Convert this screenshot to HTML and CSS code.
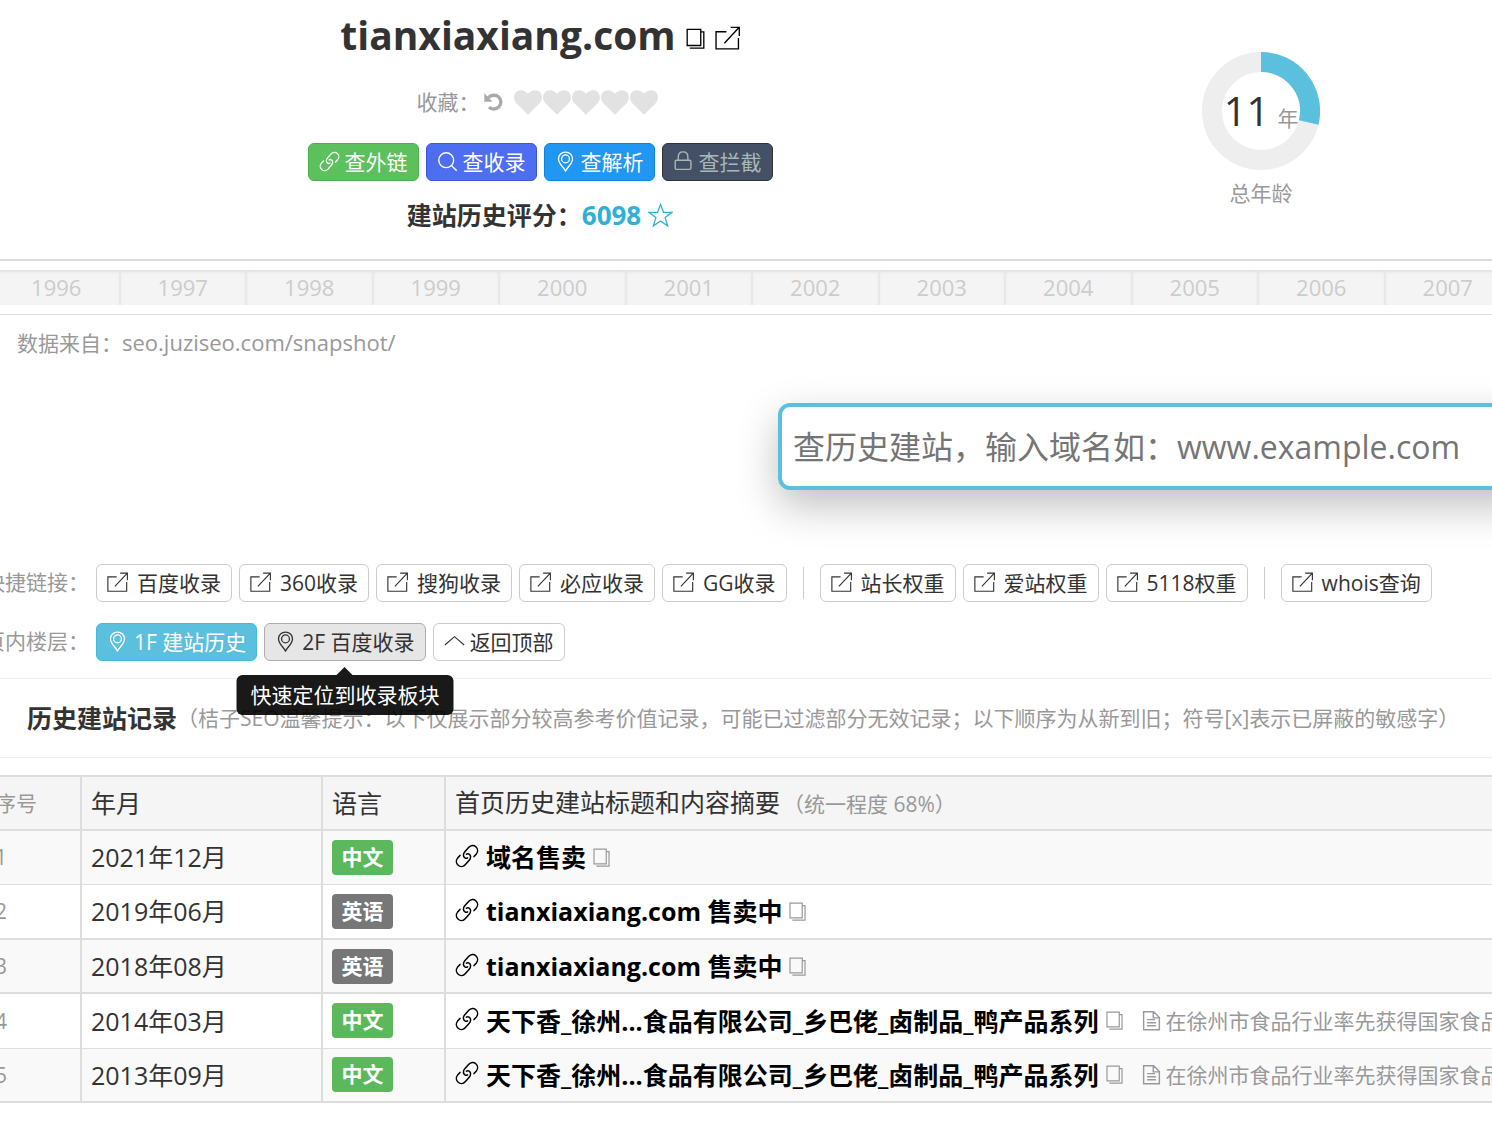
FILE: index.html
```html
<!DOCTYPE html>
<html lang="zh-CN">
<head>
<meta charset="utf-8">
<meta name="viewport" content="width=device-width, initial-scale=1">
<title>tianxiaxiang.com 建站历史</title>
<link rel="stylesheet" href="styles.css">
</head>
<body>
<svg class="sprite" aria-hidden="true">
  <symbol id="i-link" viewBox="0 0 24 24"><g fill="none" stroke="currentColor" stroke-width="1.500" stroke-linecap="round"><path d="M12.600 13.800C10.800 15 8.600 13.600 8.400 11.400C8.300 10 8.900 8.800 9.800 7.800L13.800 3.300C15.700 1.200 18.700 .8 20.800 2.700C22.900 4.600 23.200 7.700 21.400 9.900L19 12.600"/><path d="M11.400 10.200C13.200 9 15.400 10.400 15.600 12.600C15.700 14 15.100 15.200 14.200 16.200L10.200 20.700C8.300 22.800 5.300 23.200 3.200 21.300C1.100 19.400 .8 16.300 2.600 14.100L5 11.400"/></g></symbol>
  <symbol id="i-search" viewBox="0 0 24 24"><g fill="none" stroke="currentColor" stroke-width="1.600"><circle cx="10.500" cy="10.500" r="8.500"/><path d="M16.500 16.500L22.500 22.500"/></g></symbol>
  <symbol id="i-pin" viewBox="0 0 24 24"><g fill="none" stroke="currentColor" stroke-width="1.500" stroke-linejoin="round"><path d="M12 23C10.300 19 4 14.500 4 9C4 4.300 7.500 1.300 12 1.300S20 4.300 20 9C20 14.500 13.700 19 12 23Z"/><circle cx="12" cy="9" r="4.500"/></g></symbol>
  <symbol id="i-lock" viewBox="0 0 24 24"><g fill="none" stroke="currentColor" stroke-width="1.600"><rect x="2.500" y="10.500" width="18" height="10.500" rx="1.500"/><path d="M6 10.500V7C6 3.500 8.200 1 11.500 1S17 3.500 17 7V10.500"/></g></symbol>
  <symbol id="i-open" viewBox="0 0 24 24"><path fill="none" stroke="currentColor" stroke-width="1.300" d="M11 5.500H1V22H22.500V11.500M9 16.500L23 1.500M15 1.300H23.300V9.500"/></symbol>
  <symbol id="i-copy" viewBox="0 0 22 24"><path fill="none" stroke="currentColor" stroke-width="1.500" d="M1.500 1.500H17V20H1.500ZM4.500 23H20.500V4.500H17"/></symbol>
  <symbol id="i-file" viewBox="0 0 24 24"><path fill="none" stroke="currentColor" stroke-width="1.600" d="M3 2H14.500L21 8.500V22.500H3ZM14 2V9H21M7 11H16M7 14.500H17M7 18H17"/></symbol>
  <symbol id="i-star" viewBox="0 0 24 24"><path fill="none" stroke="currentColor" stroke-width="1.300" d="M12 1.500L14.900 9H23L16.500 14L18.800 22L12 17.300L5.200 22L7.500 14L1 9H9.100Z"/></symbol>
  <symbol id="i-undo" viewBox="0 0 24 24"><path fill="none" stroke="currentColor" stroke-width="3.800" d="M6 6.500C9.500 3 15 2.800 18 5.800C21.200 9 21.200 14 18 17.200C15 20.200 10 20.200 6.800 17.500"/><path fill="currentColor" d="M1.500 1.500V11H11Z"/></symbol>
  <symbol id="i-heart" viewBox="0 0 24 24"><path fill="currentColor" d="M12 23L2 13C-.5 10.500-.5 6 1.500 3.800C4 1 9 1 12 5C15 1 20 1 22.500 3.800C24.500 6 24.500 10.500 22 13Z"/></symbol>
  <symbol id="i-up" viewBox="0 0 24 24"><path fill="none" stroke="currentColor" stroke-width="1.300" d="M1 16L12 6.500L23 16"/></symbol>
</svg>

<main class="page">
  <header class="summary">
    <section class="domain">
      <div class="domain-title">
        <h1>tianxiaxiang.com</h1>
        <button class="icon-button" type="button" aria-label="复制"><svg class="icon"><use href="#i-copy"/></svg></button>
        <a class="icon-button" href="#" aria-label="打开"><svg class="icon icon-lg"><use href="#i-open"/></svg></a>
      </div>
      <div class="favorite">
        <span>收藏：</span>
        <button class="icon-button undo" type="button" aria-label="重置"><svg class="icon"><use href="#i-undo"/></svg></button>
        <span class="hearts">
          <button class="icon-button" type="button" aria-label="1"><svg class="heart"><use href="#i-heart"/></svg></button>
          <button class="icon-button" type="button" aria-label="2"><svg class="heart"><use href="#i-heart"/></svg></button>
          <button class="icon-button" type="button" aria-label="3"><svg class="heart"><use href="#i-heart"/></svg></button>
          <button class="icon-button" type="button" aria-label="4"><svg class="heart"><use href="#i-heart"/></svg></button>
          <button class="icon-button" type="button" aria-label="5"><svg class="heart"><use href="#i-heart"/></svg></button>
        </span>
      </div>
      <nav class="checks">
        <a class="btn btn-green" href="#"><svg class="icon"><use href="#i-link"/></svg>查外链</a>
        <a class="btn btn-indigo" href="#"><svg class="icon"><use href="#i-search"/></svg>查收录</a>
        <a class="btn btn-blue" href="#"><svg class="icon"><use href="#i-pin"/></svg>查解析</a>
        <a class="btn btn-dark" href="#"><svg class="icon"><use href="#i-lock"/></svg>查拦截</a>
      </nav>
      <p class="score">建站历史评分：<a href="#"><span class="score-value">6098</span><svg class="icon icon-lg"><use href="#i-star"/></svg></a></p>
    </section>
    <section class="age">
      <div class="donut">
        <svg class="donut-ring" viewBox="0 0 118 118" aria-hidden="true">
          <circle cx="59" cy="59" r="49" fill="none" stroke="#eee" stroke-width="20"/>
          <path d="M59 10A49 49 0 0 1 106.700 70.500" fill="none" stroke="#5bc0de" stroke-width="20"/>
        </svg>
        <p class="donut-text"><span class="age-value">11</span><span>年</span></p>
      </div>
      <p class="age-label">总年龄</p>
    </section>
  </header>

  <div class="timeline">
    <ol class="years">
      <li>1996</li><li>1997</li><li>1998</li><li>1999</li><li>2000</li><li>2001</li>
      <li>2002</li><li>2003</li><li>2004</li><li>2005</li><li>2006</li><li>2007</li>
    </ol>
  </div>
  <p class="source">数据来自：<span class="source-url">seo.juziseo.com/snapshot/</span></p>

  <form class="search"><input type="text" aria-label="查历史建站" placeholder="查历史建站，输入域名如：www.example.com"></form>

  <nav class="links">
    <span class="links-label">快捷链接：</span>
    <a class="btn btn-open" href="#"><svg class="icon"><use href="#i-open"/></svg>百度收录</a>
    <a class="btn btn-open" href="#"><svg class="icon"><use href="#i-open"/></svg>360收录</a>
    <a class="btn btn-open" href="#"><svg class="icon"><use href="#i-open"/></svg>搜狗收录</a>
    <a class="btn btn-open" href="#"><svg class="icon"><use href="#i-open"/></svg>必应收录</a>
    <a class="btn btn-open" href="#"><svg class="icon"><use href="#i-open"/></svg>GG收录</a>
    <span class="divider"></span>
    <a class="btn btn-open" href="#"><svg class="icon"><use href="#i-open"/></svg>站长权重</a>
    <a class="btn btn-open" href="#"><svg class="icon"><use href="#i-open"/></svg>爱站权重</a>
    <a class="btn btn-open" href="#"><svg class="icon"><use href="#i-open"/></svg>5118权重</a>
    <span class="divider"></span>
    <a class="btn btn-open" href="#"><svg class="icon"><use href="#i-open"/></svg>whois查询</a>
  </nav>
  <nav class="links">
    <span class="links-label">页内楼层：</span>
    <a class="btn btn-floor btn-info" href="#records"><svg class="icon"><use href="#i-pin"/></svg>1F 建站历史</a>
    <span class="tip-anchor">
      <a class="btn btn-floor btn-active" href="#baidu" aria-describedby="tip"><svg class="icon"><use href="#i-pin"/></svg>2F 百度收录</a>
      <span class="tip" id="tip" role="tooltip">快速定位到收录板块</span>
    </span>
    <a class="btn" href="#"><svg class="icon"><use href="#i-up"/></svg>返回顶部</a>
  </nav>

  <div class="section-head" id="records">
    <h2>历史建站记录</h2>
    <p>（桔子SEO温馨提示：以下仅展示部分较高参考价值记录，可能已过滤部分无效记录；以下顺序为从新到旧；符号[x]表示已屏蔽的敏感字）</p>
  </div>

  <table class="records">
    <colgroup><col class="c-no"><col class="c-date"><col class="c-lang"><col></colgroup>
    <thead>
      <tr><th class="no">序号</th><th>年月</th><th>语言</th><th>首页历史建站标题和内容摘要<span class="muted">（统一程度 68%）</span></th></tr>
    </thead>
    <tbody>
      <tr><td class="no">1</td><td>2021年12月</td><td><span class="tag tag-zh">中文</span></td>
        <td><div class="entry"><svg class="icon icon-link"><use href="#i-link"/></svg><a href="#">域名售卖</a><svg class="icon icon-copy"><use href="#i-copy"/></svg></div></td></tr>
      <tr><td class="no">2</td><td>2019年06月</td><td><span class="tag">英语</span></td>
        <td><div class="entry"><svg class="icon icon-link"><use href="#i-link"/></svg><a href="#">tianxiaxiang.com 售卖中</a><svg class="icon icon-copy"><use href="#i-copy"/></svg></div></td></tr>
      <tr><td class="no">3</td><td>2018年08月</td><td><span class="tag">英语</span></td>
        <td><div class="entry"><svg class="icon icon-link"><use href="#i-link"/></svg><a href="#">tianxiaxiang.com 售卖中</a><svg class="icon icon-copy"><use href="#i-copy"/></svg></div></td></tr>
      <tr><td class="no">4</td><td>2014年03月</td><td><span class="tag tag-zh">中文</span></td>
        <td><div class="entry"><svg class="icon icon-link"><use href="#i-link"/></svg><a href="#">天下香_徐州...食品有限公司_乡巴佬_卤制品_鸭产品系列</a><svg class="icon icon-copy"><use href="#i-copy"/></svg><span class="excerpt"><svg class="icon"><use href="#i-file"/></svg>在徐州市食品行业率先获得国家食品</span></div></td></tr>
      <tr><td class="no">5</td><td>2013年09月</td><td><span class="tag tag-zh">中文</span></td>
        <td><div class="entry"><svg class="icon icon-link"><use href="#i-link"/></svg><a href="#">天下香_徐州...食品有限公司_乡巴佬_卤制品_鸭产品系列</a><svg class="icon icon-copy"><use href="#i-copy"/></svg><span class="excerpt"><svg class="icon"><use href="#i-file"/></svg>在徐州市食品行业率先获得国家食品</span></div></td></tr>
    </tbody>
  </table>
</main>
</body>
</html>
```

FILE: styles.css
```css
* { box-sizing: border-box; }

body {
  margin: 0;
  overflow-x: hidden;
  background: #fff;
  color: #333;
  font: 21px/30px "Open Sans", "Noto Sans CJK SC", sans-serif;
}

h1, h2, p, ol { margin: 0; padding: 0; }
a { color: inherit; text-decoration: none; }

.sprite { position: absolute; width: 0; height: 0; }
.page { overflow: hidden; padding-bottom: 24px; }

.icon { flex: none; width: 21px; height: 21px; }
.icon-lg { width: 25px; height: 25px; }
.icon-button {
  display: flex;
  padding: 0;
  border: 0;
  background: none;
  color: #000;
}

/* Summary */
.summary {
  display: grid;
  grid-template-columns: 980fr 462fr;
  height: 261px;
  padding-left: 50px;
  border-bottom: 2px solid #ddd;
}
.domain { display: flex; flex-direction: column; align-items: center; }
.domain-title { display: flex; align-items: center; gap: 9px; height: 72px; }
.domain-title h1 { padding-bottom: 2px; font-size: 39px; line-height: 60px; font-weight: 700; }
.domain-title .icon-button { padding-top: 4px; }
.favorite { display: flex; align-items: center; height: 60px; padding-right: 6px; color: #999; }
.undo { margin: 0 10px 0 3px; color: #aaa; }
.hearts { display: flex; gap: 1px; }
.hearts .icon-button { color: #e2e2e2; }
.heart { width: 28px; height: 28px; }
.checks { display: flex; gap: 7px; margin-top: 11px; }
.score {
  display: flex;
  align-items: center;
  height: 68px;
  font-size: 25px;
  font-weight: 700;
}
.score a { display: flex; align-items: center; gap: 7px; color: #31b0d5; }
.score-value { font-size: 26px; }

.age { display: flex; flex-direction: column; align-items: center; padding-top: 52px; color: #999; }
.donut { display: grid; width: 118px; height: 118px; }
.donut-ring, .donut-text { grid-area: 1 / 1; }
.donut-text { display: flex; align-items: baseline; justify-content: center; gap: 8px; align-self: center; }
.age-value { color: #333; font-size: 40px; line-height: 60px; }
.age-label { margin-top: 8px; }

/* Buttons */
.btn {
  display: inline-flex;
  align-items: center;
  gap: 5px;
  height: 38px;
  padding: 0 10px;
  border: 1px solid #ccc;
  border-radius: 6px;
  background: #fff;
  white-space: nowrap;
}
.btn .icon { margin-bottom: 2px; }
.btn-open { gap: 9px; }
.btn-floor { gap: 6px; }
.btn-green { background: #5cc15c; border-color: #4cae4c; color: #fff; }
.btn-indigo { background: #4e6ef2; border-color: #3857dd; color: #fff; }
.btn-blue { background: #2196f3; border-color: #0d82df; color: #fff; }
.btn-dark { background: #435065; border-color: #333; color: #a9b7b7; }
.btn-info { background: #5bc0de; border-color: #46b8da; color: #fff; }
.btn-active { background: #e6e6e6; border-color: #adadad; }

/* Timeline */
.timeline { padding: 9px 0; border-bottom: 1px solid #ddd; }
.years {
  display: grid;
  grid-template-columns: repeat(12, 1fr);
  margin: 0 -20px 0 -6px;
  list-style: none;
}
.years li {
  height: 35px;
  border-right: 2px solid #e8e8e8;
  background: #f4f4f4;
  box-shadow: inset 0 3px 3px -1px #e0e0e0;
  color: #ccc;
  font-size: 22px;
  line-height: 34px;
  text-align: center;
}
.source { padding: 12px 17px 14px; color: #999; }
.source-url { font-size: 22px; }

/* Search */
.search { display: flex; margin: 31px -60px 74px 778px; }
.search input {
  flex: 1;
  min-width: 0;
  height: 87px;
  padding: 0 11px;
  border: 4px solid #5bc0de;
  border-radius: 12px;
  background: #fff;
  box-shadow: 0 16px 40px rgba(0, 0, 0, .25);
  font: inherit;
  font-size: 32px;
  outline: 0;
}
.search input::placeholder { color: #757575; opacity: 1; }

/* Quick links */
.links {
  display: flex;
  align-items: center;
  gap: 7px;
  margin: 0 0 21px -16px;
  white-space: nowrap;
}
.links-label { width: 105px; padding-bottom: 3px; color: #999; }
.divider { width: 1px; height: 32px; margin: 0 9px; background: #ccc; }
.tip-anchor { position: relative; display: flex; }
.tip {
  position: absolute;
  top: 52px;
  left: 50%;
  z-index: 2;
  padding: 5px 14px;
  border-radius: 6px;
  background: rgba(0, 0, 0, .9);
  color: #fff;
  transform: translateX(-50%);
}
.tip::before {
  content: "";
  position: absolute;
  bottom: 100%;
  left: 50%;
  margin-left: -8px;
  border: 8px solid transparent;
  border-top: 0;
  border-bottom-color: rgba(0, 0, 0, .9);
}

/* Section head */
.section-head {
  display: flex;
  align-items: center;
  height: 80px;
  margin: -4px 0 17px;
  padding-left: 27px;
  border: 1px solid #eee;
  border-width: 1px 0;
  white-space: nowrap;
}
.section-head h2 { font-size: 25px; line-height: 36px; }
.section-head p, .muted { color: #999; }

/* Records */
.records {
  width: calc(100% + 79px);
  margin: 0 -60px 0 -19px;
  border-collapse: collapse;
  table-layout: fixed;
  font-size: 25px;
}
.c-no { width: 99px; }
.c-date { width: 241px; }
.c-lang { width: 123px; }
.records tr { height: 54px; }
.records tbody tr:nth-child(even) { height: 55px; }
.records th, .records td {
  padding: 0 9px;
  border: 2px solid #ddd;
  font-weight: 400;
  text-align: left;
  white-space: nowrap;
}
.records td { border-top-width: 0; }
.records tr:nth-child(3n + 1) td { border-bottom-width: 1px; }
.records th { background: #f5f5f5; }
.records tbody tr:nth-child(odd) { background: #f9f9f9; }
.records .no { padding-left: 12px; color: #999; font-size: 21px; }
.muted { margin-left: 3px; font-size: 21px; }
.tag {
  display: block;
  width: 61px;
  border-radius: 4px;
  background: #777;
  color: #fff;
  font-size: 21px;
  font-weight: 700;
  line-height: 35px;
  text-align: center;
}
.tag-zh { background: #5cb85c; }
.entry { display: flex; align-items: center; color: #000; }
.entry a { margin: 0 5px 0 7px; font-weight: 700; }
.icon-link { width: 24px; height: 24px; margin-bottom: 3px; }
.icon-copy { height: 19px; }
.icon-copy, .excerpt { color: #999; }
.excerpt { display: flex; align-items: center; gap: 4px; margin-left: 16px; font-size: 21px; }
```
